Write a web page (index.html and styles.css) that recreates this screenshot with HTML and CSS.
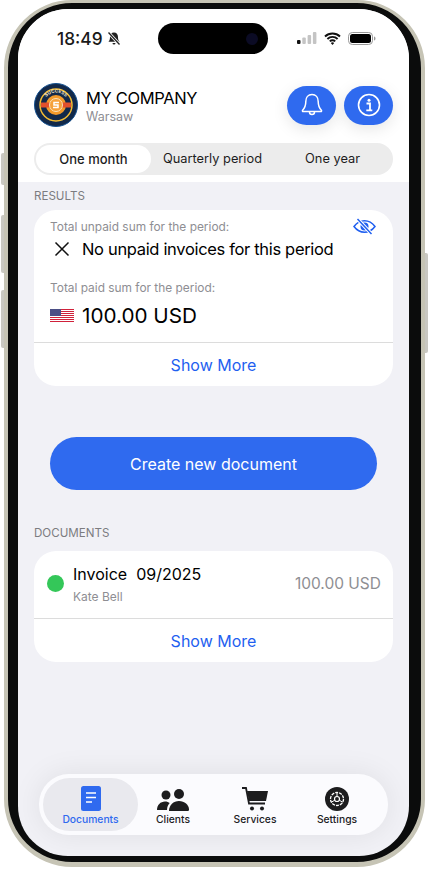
FILE: index.html

```html
<!DOCTYPE html>
<html>
	<head>
		<meta charset="utf-8">
		<title>My Company</title>
		<link rel="stylesheet" href="styles.css">
	</head>
	<body>
		<div class="phone">
			<div class="side-btn side-mute"></div>
			<div class="side-btn side-up"></div>
			<div class="side-btn side-down"></div>
			<div class="side-btn side-power"></div>
			<div class="screen">
				<div class="top">
					<div class="status">
						<div class="status-left">
							<span class="time">18:49</span>
							<svg width="14" height="15" viewBox="0 0 14 15"><path d="M7 1.500c-2.500 0-4 1.900-4 4.500 0 2.600-.6 3.700-1.600 4.800h11.200C11.600 9.700 11 8.600 11 6 11 3.400 9.500 1.500 7 1.500z" fill="#222"/><path d="M5.500 12h3a1.500 1.500 0 0 1-3 0z" fill="#222"/><path d="M1.500 1.500l11 12" stroke="#fff" stroke-width="3"/><path d="M1.500 1.500l11 12" stroke="#222" stroke-width="1.300"/></svg>
						</div>
						<div class="island"><span class="lens"></span></div>
						<div class="status-right">
							<svg width="20" height="13" viewBox="0 0 20 13"><rect x="0" y="8" width="3.500" height="4" rx="1" fill="#111"/><rect x="5.300" y="5.500" width="3.500" height="6.500" rx="1" fill="#c4c4c4"/><rect x="10.600" y="3" width="3.500" height="9" rx="1" fill="#c4c4c4"/><rect x="15.900" y="0" width="3.500" height="12" rx="1" fill="#c4c4c4"/></svg>
							<svg width="17" height="13" viewBox="0 0 17 13"><path d="M1 4.500a10.800 10.800 0 0 1 15 0M3.400 7a7.300 7.300 0 0 1 10.200 0M5.800 9.400a3.800 3.800 0 0 1 5.400 0" fill="none" stroke="#111" stroke-width="1.900"/><path d="M8.500 13l-1.700-2a2.500 2.500 0 0 1 3.400 0z" fill="#111"/></svg>
							<svg width="28" height="13" viewBox="0 0 28 13"><rect x=".5" y=".5" width="24" height="12" rx="3.800" fill="none" stroke="#999"/><rect x="2" y="2" width="21" height="9" rx="2.500" fill="#000"/><path d="M26 4.500c1 .3 1.500 1 1.500 2s-.5 1.700-1.500 2z" fill="#999"/></svg>
						</div>
					</div>
					<div class="company">
						<svg class="logo" width="44" height="44" viewBox="0 0 44 44">
							<defs><path id="arc-top" d="M9.500 22a12.500 12.500 0 0 1 25 0"/></defs>
							<circle cx="22" cy="22" r="21.500" fill="#12294a" stroke="#14508f"/>
							<circle cx="22" cy="22" r="16" fill="#12294a" stroke="#f5bd33" stroke-width="1.500"/>
							<circle cx="22" cy="22" r="10" fill="#f39a2b"/>
							<rect x="7" y="19.500" width="30" height="5" fill="#e2502c"/>
							<circle cx="22" cy="22" r="6.500" fill="#f6a13a" stroke="#fbe1b8"/>
							<path d="M25 19.500h-5v2.500h4v2.500h-5" fill="none" stroke="#fff" stroke-width="1.500"/>
							<text class="logo-text"><textPath href="#arc-top" startOffset="50%" text-anchor="middle">SUCCESS</textPath></text>
						</svg>
						<div class="company-text">
							<div class="company-name">MY COMPANY</div>
							<div class="company-city">Warsaw</div>
						</div>
						<div class="round-btn">
							<svg width="22" height="24" viewBox="0 0 22 24"><path d="M11 1.500c-3.800 0-6.200 3-6.200 7 0 4.500-1 6.500-3.200 8.800-.4.500-.1 1.200.6 1.200h17.600c.7 0 1-.7.600-1.200-2.200-2.300-3.200-4.300-3.200-8.800 0-4-2.400-7-6.200-7z" fill="none" stroke="#fff" stroke-width="1.500"/><path d="M8.500 19a2.500 2.500 0 0 0 5 0" fill="none" stroke="#fff" stroke-width="1.500"/></svg>
						</div>
						<div class="round-btn">
							<svg width="24" height="24" viewBox="0 0 24 24"><circle cx="12" cy="12" r="10.500" fill="none" stroke="#fff" stroke-width="1.600"/><circle cx="12" cy="7.300" r="1.500" fill="#fff"/><path d="M9.500 10.500H13v6.500M9.300 17.300h6" fill="none" stroke="#fff" stroke-width="1.800"/></svg>
						</div>
					</div>
					<div class="segments">
						<div class="segment segment-on">One month</div>
						<div class="segment">Quarterly period</div>
						<div class="segment">One year</div>
					</div>
				</div>

				<div class="content">
					<div class="section-label">RESULTS</div>
					<div class="card">
						<div class="results">
							<div class="results-head">
								<span class="small-grey">Total unpaid sum for the period:</span>
								<svg width="23" height="17" viewBox="0 0 23 17"><path d="M1 8.500C4 4.500 7.500 2.800 11.500 2.800S19 4.500 22 8.500c-3 4-6.500 5.700-10.500 5.700S4 12.500 1 8.500z" fill="none" stroke="#1f5ff0" stroke-width="1.500"/><circle cx="11.500" cy="8.500" r="4" fill="#1f5ff0"/><path d="M4.500 1l14 15" stroke="#fff" stroke-width="3.500"/><path d="M4.500 1l14 15" stroke="#1f5ff0" stroke-width="1.500"/></svg>
							</div>
							<div class="result-line">
								<span class="result-icon"><svg width="16" height="16" viewBox="0 0 16 16"><path d="M1.500 1.500l13 13M14.500 1.500l-13 13" stroke="#111" stroke-width="1.500"/></svg></span>
								<span class="no-unpaid">No unpaid invoices for this period</span>
							</div>
							<div class="small-grey paid-label">Total paid sum for the period:</div>
							<div class="result-line paid-line">
								<span class="result-icon">
									<svg width="24" height="13" viewBox="0 0 24 13"><rect width="24" height="13" fill="#fff"/><path d="M0 .5h24M0 2.500h24M0 4.500h24M0 6.500h24M0 8.500h24M0 10.500h24M0 12.500h24" stroke="#d0213a" stroke-width="1"/><rect width="11" height="7" fill="#4b4e85"/></svg>
								</span>
								<span class="paid-sum">100.00 USD</span>
							</div>
						</div>
						<div class="show-more">Show More</div>
					</div>

					<div class="create-btn">Create new document</div>

					<div class="section-label">DOCUMENTS</div>
					<div class="card card-docs">
						<div class="doc">
							<span class="dot"></span>
							<div class="doc-text">
								<div class="doc-title">Invoice&nbsp; 09/2025</div>
								<div class="doc-client">Kate Bell</div>
							</div>
							<div class="doc-sum">100.00 USD</div>
						</div>
						<div class="show-more">Show More</div>
					</div>

					<div class="dock">
						<div class="tab tab-on">
							<svg width="20" height="25" viewBox="0 0 20 25"><rect width="20" height="25" rx="2.500" fill="#2f6aef"/><path d="M5 7h10M5 11.500h10M5 16h6" stroke="#fff" stroke-width="1.400"/></svg>
							<span>Documents</span>
						</div>
						<div class="tab">
							<svg width="32" height="22" viewBox="0 0 32 22"><circle cx="9" cy="6" r="4.500" fill="#1c1c1e"/><circle cx="22" cy="5" r="5" fill="#1c1c1e"/><path d="M0 21c0-5 3.500-8.500 8-8.500 2 0 3.500.6 4.700 1.600-1.700 1.700-2.500 4-2.700 6.900z" fill="#1c1c1e"/><path d="M12 22c0-6 4.500-10 10-10s10 4 10 8.500c0 1-.6 1.500-1.500 1.500z" fill="#1c1c1e"/></svg>
							<span>Clients</span>
						</div>
						<div class="tab">
							<svg width="26" height="24" viewBox="0 0 26 24"><path d="M0 1h4l3 15.500h16" fill="none" stroke="#1c1c1e" stroke-width="1.800"/><path d="M5 4h21l-2 10H7z" fill="#1c1c1e"/><circle cx="10" cy="21.500" r="2" fill="#1c1c1e"/><circle cx="20" cy="21.500" r="2" fill="#1c1c1e"/></svg>
							<span>Services</span>
						</div>
						<div class="tab">
							<svg width="24" height="24" viewBox="0 0 24 24"><circle cx="12" cy="12" r="12" fill="#1c1c1e"/><circle cx="12" cy="12" r="6.500" fill="none" stroke="#fff" stroke-width="1.300" stroke-dasharray="3 1"/><circle cx="12" cy="12" r="2.500" fill="none" stroke="#fff" stroke-width="1.200"/><path d="M12 9.500V5.500M14.200 13.200l3.500 2M9.800 13.200l-3.500 2" stroke="#fff" stroke-width="1"/></svg>
							<span>Settings</span>
						</div>
					</div>
				</div>
			</div>
		</div>
	</body>
</html>
```

FILE: styles.css

```css
body {
	margin: 0;
	background-color: #ffffff;
	font-family: Inter, "Liberation Sans", sans-serif;
	color: #000000;
}

.phone {
	position: relative;
	box-sizing: border-box;
	width: 421px;
	height: 867px;
	margin-left: 4px;
	padding: 6px 12px 6px 10px;
	background-color: #0b0c0c;
	border: 4px solid #c6c4b5;
	border-top-width: 3px;
	border-bottom-width: 5px;
	border-radius: 68px;
}

.side-btn {
	position: absolute;
	left: -7px;
	width: 3px;
	background-color: #c9c8c2;
	border-radius: 2px 0 0 2px;
}

.side-mute { top: 150px; height: 32px; }
.side-up { top: 212px; height: 58px; }
.side-down { top: 287px; height: 58px; }

.side-power {
	left: auto;
	right: -7px;
	top: 250px;
	height: 100px;
	border-radius: 0 2px 2px 0;
}

.screen {
	display: flex;
	flex-direction: column;
	height: 847px;
	overflow: hidden;
	background-color: #f1f1f6;
	border-radius: 50px;
}

.top {
	height: 173px;
	background-color: #ffffff;
}

.status {
	display: flex;
	align-items: center;
	justify-content: space-between;
	height: 31px;
	padding: 14px 33px 0 39px;
}

.status-left {
	display: flex;
	align-items: center;
	gap: 4px;
	width: 101px;
}

.time {
	font-size: 17.3px;
	font-weight: 500;
	color: #1a1a1a;
}

.island {
	display: flex;
	align-items: center;
	justify-content: flex-end;
	box-sizing: border-box;
	width: 110px;
	height: 31px;
	margin-right: 29px;
	padding-right: 10px;
	background-color: #000000;
	border-radius: 16px;
}

.lens {
	width: 12px;
	height: 12px;
	background-color: #0b0b24;
	border-radius: 50%;
}

.status-right {
	display: flex;
	align-items: center;
	gap: 7px;
}

.company {
	display: flex;
	align-items: center;
	gap: 8px;
	margin-top: 29px;
	padding: 0 16px;
}

.logo-text {
	font-size: 4.6px;
	font-weight: 700;
	fill: #f6e7c8;
}

.company-text {
	flex: 1;
}

.company-name {
	padding-top: 1px;
	font-size: 16.5px;
	line-height: 20px;
	letter-spacing: -0.35px;
}

.company-city {
	margin-top: 1px;
	font-size: 12.5px;
	line-height: 15px;
	color: #8e8e93;
}

.round-btn {
	display: flex;
	align-items: center;
	justify-content: center;
	width: 49px;
	height: 39px;
	background-color: #2f6aef;
	border-radius: 20px;
	box-shadow: 0 4px 16px rgba(0, 0, 0, 0.1);
}

.segments {
	display: flex;
	box-sizing: border-box;
	height: 32px;
	margin: 16px 16px 0;
	padding: 2px;
	background-color: #ececec;
	border-radius: 16px;
}

.segment {
	flex: 1;
	padding-left: 3px;
	font-size: 12.8px;
	line-height: 28px;
	text-align: center;
	color: #1c1c1e;
}

.segment-on {
	flex: none;
	width: 115px;
	padding-left: 0;
	font-size: 13px;
	font-weight: 500;
	background-color: #ffffff;
	border-radius: 14px;
}

.content {
	flex: 1;
	display: flex;
	flex-direction: column;
	padding: 0 16px;
}

.section-label {
	margin-top: 7px;
	font-size: 11.6px;
	line-height: 14px;
	color: #7c7c80;
}

.card {
	margin: 7px 0 0;
	background-color: #ffffff;
	border-radius: 22px;
}

.card-docs {
	margin-top: 11px;
}

.results {
	height: 133px;
	padding: 8px 17px 0 16px;
	box-sizing: border-box;
	border-bottom: 1px solid #dcdcdc;
}

.results-head {
	display: flex;
	align-items: center;
	justify-content: space-between;
}

.small-grey {
	font-size: 11.9px;
	line-height: 14px;
	color: #8e8e93;
}

.result-line {
	display: flex;
	align-items: center;
	margin-top: 2px;
}

.result-icon {
	display: flex;
	justify-content: center;
	width: 24px;
	margin-right: 8px;
}

.no-unpaid {
	font-size: 16.5px;
	line-height: 24px;
	letter-spacing: -0.33px;
}

.paid-label {
	margin-top: 20px;
}

.paid-line {
	margin-top: 6px;
}

.paid-sum {
	font-size: 20.7px;
	line-height: 29px;
}

.show-more {
	height: 43px;
	font-size: 16px;
	line-height: 44px;
	text-align: center;
	color: #1f5ff0;
}

.create-btn {
	height: 53px;
	margin: 51px 16px 29px;
	font-size: 16px;
	line-height: 54px;
	text-align: center;
	color: #ffffff;
	background-color: #2f6aef;
	border-radius: 27px;
}

.doc {
	display: flex;
	align-items: center;
	box-sizing: border-box;
	height: 68px;
	padding: 0 12px 3px 13px;
	border-bottom: 1px solid #dcdcdc;
}

.dot {
	width: 17px;
	height: 17px;
	margin-right: 9px;
	background-color: #34c759;
	border-radius: 50%;
}

.doc-text {
	flex: 1;
}

.doc-title {
	font-size: 16px;
	line-height: 22px;
}

.doc-client {
	margin-top: 5px;
	font-size: 12px;
	line-height: 14px;
	color: #8e8e93;
}

.doc-sum {
	font-size: 15.5px;
	color: #8e8e93;
}

.dock {
	display: flex;
	box-sizing: border-box;
	width: 349px;
	height: 61px;
	margin: 112px 0 0 5px;
	padding: 4px;
	background-color: #fbfbfe;
	border-radius: 30px;
	box-shadow: 0 0 30px rgba(0, 0, 0, 0.08);
}

.tab {
	flex: none;
	display: flex;
	flex-direction: column;
	align-items: center;
	justify-content: flex-end;
	gap: 2px;
	width: 82px;
	padding-bottom: 6px;
	font-size: 10.3px;
	font-weight: 500;
	color: #1c1c1e;
}

.tab-on {
	width: 95px;
	margin-right: -6px;
	color: #2f6aef;
	background-color: #e9e9ee;
	border-radius: 27px;
}
```
